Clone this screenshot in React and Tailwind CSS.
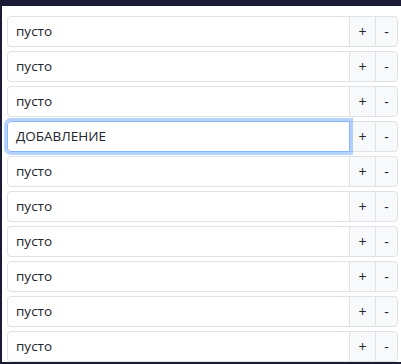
import React from "react";

const rows = ["пусто", "пусто", "пусто", "ДОБАВЛЕНИЕ", "пусто", "пусто", "пусто", "пусто", "пусто", "пусто"];

export default function App() {
  return (
    <div className="w-[401px] h-[364px] bg-[#1c1b36] pt-[6px] pl-[2px] pb-[2px] overflow-hidden" style={{ fontFamily: '"Open Sans", "Noto Sans", sans-serif' }}>
      <div className="bg-white h-full pt-[10px] pl-[5px] pr-[3px] flex flex-col gap-1">
        {rows.map((t, i) => {
          const focused = i === 3;
          return (
            <div key={i} className="flex h-[31px] shrink-0">
              <div
                className={
                  focused
                    ? "relative z-10 flex-1 flex items-center px-2 text-[13.5px] text-[#212529] border border-[#86b7fe] rounded-l shadow-[0_0_0_3px_rgba(13,110,253,0.3)]"
                    : "flex-1 flex items-center px-2 text-[13.5px] text-[#212529] border border-[#dee2e6] rounded-l"
                }
              >
                {t}
              </div>
              <div className="-ml-px w-[27px] flex items-center justify-center text-[14px] text-[#212529] bg-[#f8f9fa] border border-[#dee2e6]">+</div>
              <div className="-ml-px w-[23px] flex items-center justify-center text-[14px] text-[#212529] bg-[#f8f9fa] border border-[#dee2e6] rounded-r">-</div>
            </div>
          );
        })}
      </div>
    </div>
  );
}
